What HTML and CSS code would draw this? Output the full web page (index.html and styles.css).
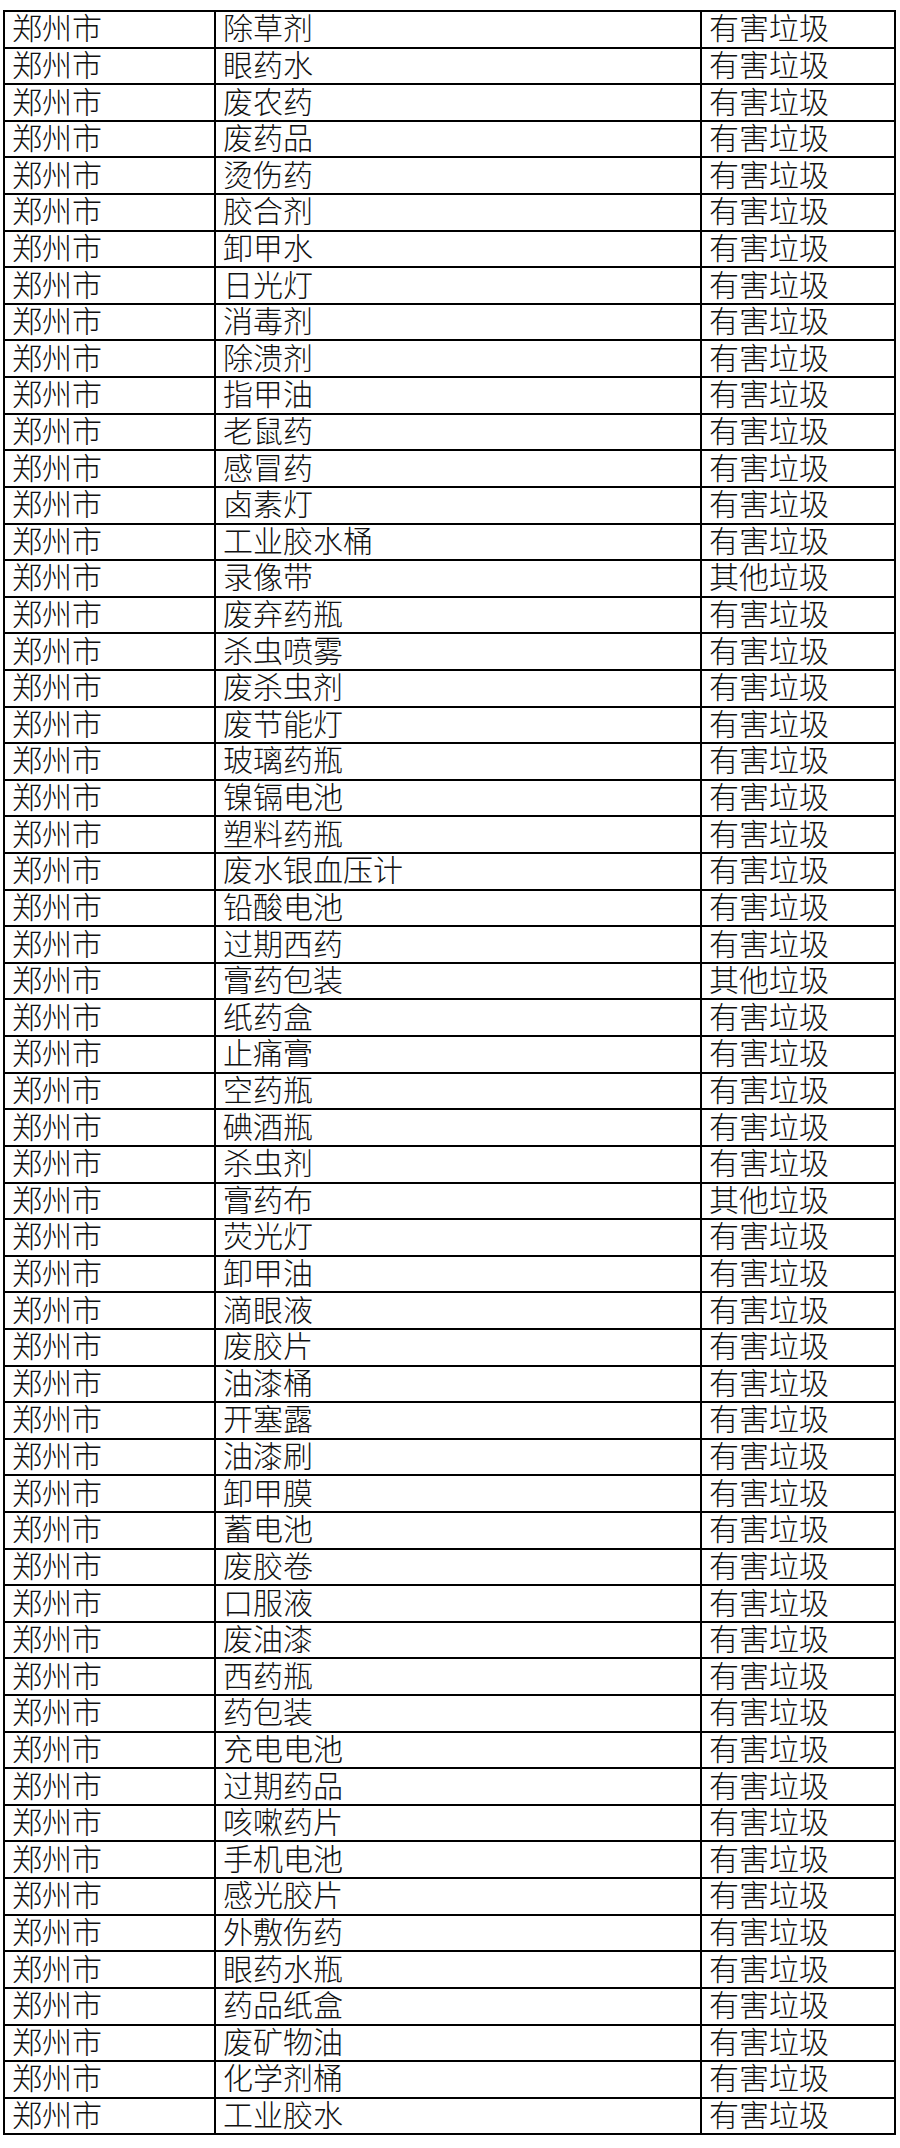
FILE: index.html
```html
<!DOCTYPE html>
<html lang="zh-CN">
<head>
<meta charset="utf-8">
<title>郑州市垃圾分类</title>
<link rel="stylesheet" href="styles.css">
</head>
<body>
<div class="sheet" id="sheet"></div>
<script src="app.js"></script>
</body>
</html>
```

FILE: styles.css
```css
html, body {
  margin: 0;
  padding: 0;
  background: #fff;
}
body {
  padding: 10px 0 0 3px;
}
.sheet {
  display: grid;
  grid-template-columns: 209px 484px 192px;
  grid-auto-rows: 34.62px;
  gap: 2px;
  padding: 2px;
  background: #000;
  width: max-content;
}
.cell {
  background: #fff;
  display: flex;
  align-items: center;
  font-family: "Liberation Sans", "Noto Sans CJK SC", sans-serif;
  font-weight: 300;
  font-size: 30px;
  line-height: 1;
  color: #111;
  padding-left: 7px;
  white-space: nowrap;
}
```

FILE: app.js
```js
const rows = [
  ["除草剂","有害垃圾"],["眼药水","有害垃圾"],["废农药","有害垃圾"],["废药品","有害垃圾"],
  ["烫伤药","有害垃圾"],["胶合剂","有害垃圾"],["卸甲水","有害垃圾"],["日光灯","有害垃圾"],
  ["消毒剂","有害垃圾"],["除溃剂","有害垃圾"],["指甲油","有害垃圾"],["老鼠药","有害垃圾"],
  ["感冒药","有害垃圾"],["卤素灯","有害垃圾"],["工业胶水桶","有害垃圾"],["录像带","其他垃圾"],
  ["废弃药瓶","有害垃圾"],["杀虫喷雾","有害垃圾"],["废杀虫剂","有害垃圾"],["废节能灯","有害垃圾"],
  ["玻璃药瓶","有害垃圾"],["镍镉电池","有害垃圾"],["塑料药瓶","有害垃圾"],["废水银血压计","有害垃圾"],
  ["铅酸电池","有害垃圾"],["过期西药","有害垃圾"],["膏药包装","其他垃圾"],["纸药盒","有害垃圾"],
  ["止痛膏","有害垃圾"],["空药瓶","有害垃圾"],["碘酒瓶","有害垃圾"],["杀虫剂","有害垃圾"],
  ["膏药布","其他垃圾"],["荧光灯","有害垃圾"],["卸甲油","有害垃圾"],["滴眼液","有害垃圾"],
  ["废胶片","有害垃圾"],["油漆桶","有害垃圾"],["开塞露","有害垃圾"],["油漆刷","有害垃圾"],
  ["卸甲膜","有害垃圾"],["蓄电池","有害垃圾"],["废胶卷","有害垃圾"],["口服液","有害垃圾"],
  ["废油漆","有害垃圾"],["西药瓶","有害垃圾"],["药包装","有害垃圾"],["充电电池","有害垃圾"],
  ["过期药品","有害垃圾"],["咳嗽药片","有害垃圾"],["手机电池","有害垃圾"],["感光胶片","有害垃圾"],
  ["外敷伤药","有害垃圾"],["眼药水瓶","有害垃圾"],["药品纸盒","有害垃圾"],["废矿物油","有害垃圾"],
  ["化学剂桶","有害垃圾"],["工业胶水","有害垃圾"]
];
const sheet = document.getElementById("sheet");
for (const [item, kind] of rows) {
  for (const text of ["郑州市", item, kind]) {
    const d = document.createElement("div");
    d.className = "cell";
    d.textContent = text;
    sheet.appendChild(d);
  }
}
```
